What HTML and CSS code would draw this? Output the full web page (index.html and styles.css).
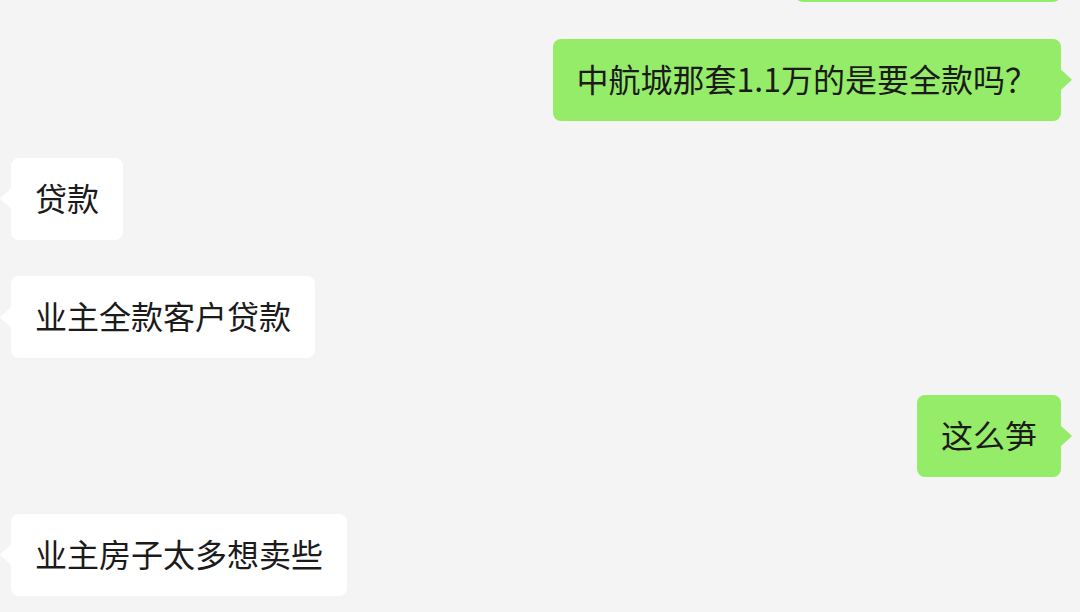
FILE: index.html
```html
<!DOCTYPE html>
<html lang="zh-CN">
<head>
<meta charset="utf-8">
<title>聊天</title>
<link rel="stylesheet" href="styles.css">
</head>
<body>
<div class="chat">
  <div class="row mine"><div class="bubble green partial"></div></div>
  <div class="row mine"><div class="bubble green">中航城那套1.1万的是要全款吗？</div></div>
  <div class="row theirs"><div class="bubble white">贷款</div></div>
  <div class="row theirs"><div class="bubble white">业主全款客户贷款</div></div>
  <div class="row mine"><div class="bubble green">这么笋</div></div>
  <div class="row theirs"><div class="bubble white">业主房子太多想卖些</div></div>
</div>
</body>
</html>
```
FILE: styles.css
```css
html, body {
  margin: 0;
  padding: 0;
  width: 1080px;
  height: 612px;
  overflow: hidden;
  background: #f4f4f4;
}

.chat {
  display: flex;
  flex-direction: column;
  gap: 36.75px;
  margin-top: -80px;
  padding: 0 19px 0 11px;
  font-family: "Microsoft YaHei", "Noto Sans CJK SC", sans-serif;
}

.row {
  display: flex;
}

.row.mine {
  justify-content: flex-end;
}

.row.theirs {
  justify-content: flex-start;
}

.bubble {
  position: relative;
  font-size: 32px;
  line-height: 36px;
  padding: 21px 24px 25px;
  border-radius: 8px;
  color: #1b1b1b;
  white-space: nowrap;
}

.bubble.partial {
  width: 218px;
  height: 36px;
}

.bubble.green {
  background: #95ec69;
}

.bubble.white {
  background: #ffffff;
}

.bubble.green::after {
  content: "";
  position: absolute;
  right: -11px;
  top: 50%;
  width: 12px;
  height: 22px;
  margin-top: -11px;
  background: #95ec69;
  clip-path: polygon(0 0, 85% 42%, 100% 50%, 85% 58%, 0 100%);
}

.bubble.white::before {
  content: "";
  position: absolute;
  left: -11px;
  top: 50%;
  width: 12px;
  height: 22px;
  margin-top: -11px;
  background: #ffffff;
  clip-path: polygon(100% 0, 15% 42%, 0 50%, 15% 58%, 100% 100%);
}
```
